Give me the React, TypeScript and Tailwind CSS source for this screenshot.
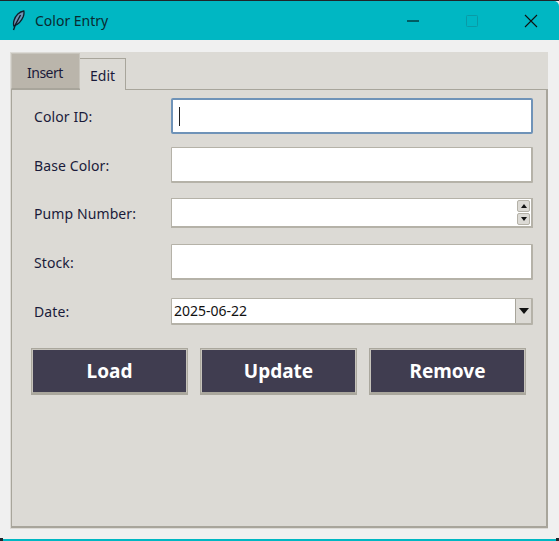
import React from "react";

const font = { fontFamily: '"Noto Sans", "Open Sans", sans-serif' };

function Row({ label, h, mt, children }: { label: string; h: string; mt: string; children: React.ReactNode }) {
  return (
    <div className={`flex items-center ${h} ${mt}`}>
      <div className="w-[159px] shrink-0 pl-[22px] text-[14px] text-[#1a1a3a] tracking-[0.1px]">{label}</div>
      <div className="w-[362px] shrink-0 h-full">{children}</div>
    </div>
  );
}

const Entry = () => <div className="w-full h-full bg-white border border-[#b5b2a8] border-b-2 border-r-2 rounded-[1px]" />;

function Btn({ label, ml }: { label: string; ml?: string }) {
  return (
    <div className={`w-[157px] h-[47px] ${ml ?? ""} pt-[1px] bg-[#403d50] border-2 border-[#c6c3bb] border-b-[3px] border-b-[#aaa79d] outline outline-1 outline-[#aaa79d] outline-offset-[-1px] flex items-center justify-center text-white font-bold text-[19px]`}>
      {label}
    </div>
  );
}

export default function App() {
  return (
    <div className="relative w-[559px] h-[541px] bg-[#f0f0f0] flex flex-col overflow-hidden" style={font}>
      <div className="h-px bg-[#20252b] shrink-0" />
      <div className="h-[39px] bg-[#00b7c3] rounded-tr-[5px] flex items-center shrink-0">
        <svg width="14" height="21" viewBox="0 0 14 21" className="ml-[11px]">
          <path d="M12.800 1C8.500 1.500 4.500 5.500 3 10.500c-.6 2-.6 3.800-.2 5.500C7.500 14.500 10.500 11 12.300 6.500c.7-2 .9-3.800.5-5.500z" fill="#6f92b4" stroke="#0f1e2a" strokeWidth="1.300" />
          <path d="M9.500 5 4.500 14.500 2.500 20" stroke="#0c1a26" strokeWidth="1.400" fill="none" />
        </svg>
        <div className="ml-[10px] text-[14px] text-[#0a2a30]">Color Entry</div>
        <div className="ml-auto flex items-center">
          <svg width="12" height="2" viewBox="0 0 12 2"><path d="M0 1h12" stroke="#000" strokeWidth="1" /></svg>
          <svg width="12" height="12" viewBox="0 0 12 12" className="ml-[47px]"><rect x=".5" y=".5" width="11" height="11" rx="1" fill="none" stroke="#0a9aa6" /></svg>
          <svg width="14" height="14" viewBox="0 0 14 14" className="ml-[46px] mr-[21px]"><path d="M1 1l12 12M13 1 1 13" stroke="#111" strokeWidth="1.100" /></svg>
        </div>
      </div>

      <div className="mt-[12px] ml-[10px] w-[538px] h-[477px] bg-[#dcdad5] flex flex-col shrink-0">
        <div className="flex items-end h-[37px] pl-px shrink-0 relative z-10">
          <div className="w-[69px] h-[36px] bg-[#bab5ab] border border-[#c8c5bd] border-b-[#a8a59b] pl-[15px] pt-[8px] text-[14px] tracking-[-0.5px] text-[#1a1a3a]">Insert</div>
          <div className="w-[46px] h-[32px] -mb-px bg-[#dcdad5] border border-[#a8a59b] border-b-0 border-l-0 pl-[10px] pt-[6px] text-[14px] text-[#1a1a3a]">Edit</div>
        </div>
        <div className="mx-px w-[537px] h-[439px] border border-[#a8a59b] border-b-2 border-r-2 flex flex-col">
          <Row label="Color ID:" h="h-[36px]" mt="mt-[8px]">
            <div className="w-full h-full bg-white border-2 border-[#6f93b8] rounded-[2px] flex items-center pl-[6px]">
              <div className="w-px h-[19px] bg-[#222]" />
            </div>
          </Row>
          <Row label="Base Color:" h="h-[36px]" mt="mt-[13px]"><Entry /></Row>
          <Row label="Pump Number:" h="h-[30px]" mt="mt-[15px]">
            <div className="w-full h-full bg-white border border-[#b5b2a8] border-b-2 border-r-2 flex items-center justify-end pr-[1px]">
              <div className="flex flex-col gap-px w-[13px]">
                <div className="h-[12px] bg-[#dcdad5] border border-[#b5b2a8] rounded-[2px] flex items-center justify-center">
                  <svg width="6" height="4" viewBox="0 0 6 4"><path d="M3 0l3 4H0z" fill="#111" /></svg>
                </div>
                <div className="h-[12px] bg-[#dcdad5] border border-[#b5b2a8] rounded-[2px] flex items-center justify-center">
                  <svg width="6" height="4" viewBox="0 0 6 4"><path d="M0 0h6L3 4z" fill="#111" /></svg>
                </div>
              </div>
            </div>
          </Row>
          <Row label="Stock:" h="h-[36px]" mt="mt-[16px]"><Entry /></Row>
          <Row label="Date:" h="h-[27px]" mt="mt-[18px]">
            <div className="w-full h-full bg-white border border-[#b5b2a8] border-b-2 border-r-2 flex items-center rounded-[1px]">
              <div className="pl-[2px] pb-[1px] text-[14px] text-[#111] flex-1">2025-06-22</div>
              <div className="w-[16px] h-full bg-[#dcdad5] border-l border-[#a8a59b] flex items-center justify-center">
                <svg width="10" height="6" viewBox="0 0 10 6"><path d="M0 0h10L5 6z" fill="#111" /></svg>
              </div>
            </div>
          </Row>
          <div className="flex mt-[23px] ml-[19px]">
            <Btn label="Load" />
            <Btn label="Update" ml="ml-[12px]" />
            <Btn label="Remove" ml="ml-[12px]" />
          </div>
        </div>
      </div>
      <div className="mt-auto h-[2px] bg-[#00b7c3] shrink-0" />
      <div className="absolute left-0 bottom-0 w-[3px] h-[3px] bg-[#20252b]" />
      <div className="absolute right-0 bottom-0 w-[3px] h-[3px] bg-[#20252b]" />
    </div>
  );
}
